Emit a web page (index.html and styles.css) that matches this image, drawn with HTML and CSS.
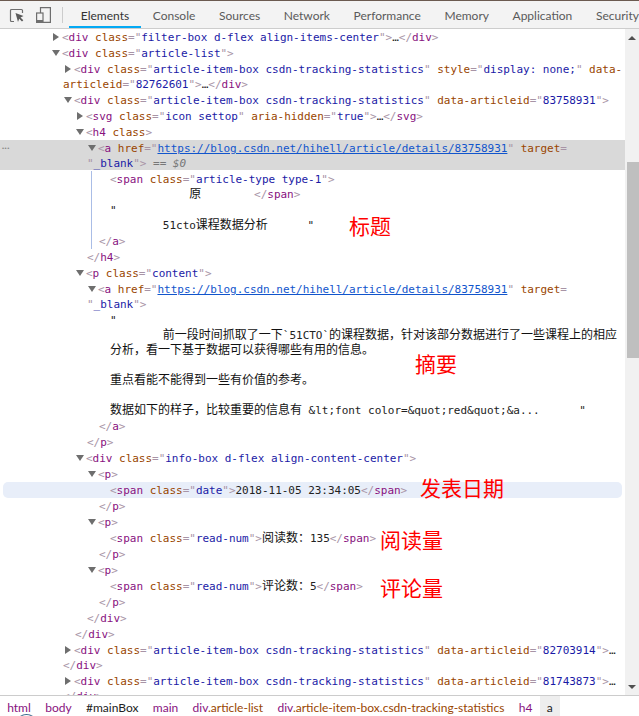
FILE: index.html
```html
<!DOCTYPE html>
<html lang="en">
<head>
<meta charset="utf-8">
<title>DevTools Elements</title>
<link rel="stylesheet" href="styles.css">
</head>
<body>
<div class="devtools">
  <header class="toolbar">
    <svg class="tool inspect" width="16" height="16" viewBox="0 0 16 16"><path d="M5 14.5H2.5a1 1 0 0 1-1-1v-10a1 1 0 0 1 1-1h10a1 1 0 0 1 1 1V6" fill="none" stroke="#6e6e6e" stroke-width="1.2"/><path d="M6.5 6l8 3-3 1.4 2.8 2.8-1.3 1.3-2.8-2.8L9 15z" fill="#5a5a5a"/></svg>
    <svg class="tool device" width="16" height="16" viewBox="0 0 16 16"><path d="M5.5 6V.6h9.9v14.8H8" fill="none" stroke="#6e6e6e" stroke-width="1.2"/><rect x="1.6" y="6" width="6.4" height="9.4" fill="#f3f3f3" stroke="#6e6e6e" stroke-width="1.2"/><rect x="1.6" y="13" width="6.4" height="2.4" fill="#6e6e6e"/></svg>
    <span class="divider"></span>
    <nav class="tabs">
      <span class="tab active">Elements</span>
      <span class="tab">Console</span>
      <span class="tab">Sources</span>
      <span class="tab">Network</span>
      <span class="tab">Performance</span>
      <span class="tab">Memory</span>
      <span class="tab">Application</span>
      <span class="tab">Security</span>
    </nav>
  </header>
  <main class="body">
    <div class="tree">
      <div class="row a0"><span class="tw r"></span><i>&lt;</i><b>div</b> <u>class</u><i>="</i><s>filter-box d-flex align-items-center</s><i>"&gt;</i>…<i>&lt;/</i><b>div</b><i>&gt;</i></div>
      <div class="row a0"><span class="tw d"></span><i>&lt;</i><b>div</b> <u>class</u><i>="</i><s>article-list</s><i>"&gt;</i></div>
      <div class="row a1"><span class="tw r"></span><i>&lt;</i><b>div</b> <u>class</u><i>="</i><s>article-item-box csdn-tracking-statistics</s><i>"</i> <u>style</u><i>="</i><s>display: none;</s><i>"</i> <u>data-<br>articleid</u><i>="</i><s>82762601</s><i>"&gt;</i>…<i>&lt;/</i><b>div</b><i>&gt;</i></div>
      <div class="row a1"><span class="tw d"></span><i>&lt;</i><b>div</b> <u>class</u><i>="</i><s>article-item-box csdn-tracking-statistics</s><i>"</i> <u>data-articleid</u><i>="</i><s>83758931</s><i>"&gt;</i></div>
      <div class="row a2"><span class="tw r"></span><i>&lt;</i><b>svg</b> <u>class</u><i>="</i><s>icon settop</s><i>"</i> <u>aria-hidden</u><i>="</i><s>true</s><i>"&gt;</i>…<i>&lt;/</i><b>svg</b><i>&gt;</i></div>
      <div class="row a2"><span class="tw d"></span><i>&lt;</i><b>h4</b> <u>class</u><i>&gt;</i></div>
      <div class="row a3 selected"><span class="dots">•••</span><span class="tw d"></span><i>&lt;</i><b>a</b> <u>href</u><i>="</i><a class="link">https://blog.csdn.net/hihell/article/details/83758931</a><i>"</i> <u>target</u><i>=<br>"</i><s>_blank</s><i>"&gt;</i> <em>== $0</em></div>
      <div class="guarded">
        <div class="row t110"><i>&lt;</i><b>span</b> <u>class</u><i>="</i><s>article-type type-1</s><i>"&gt;</i><br>            <span class="zh">原</span>        <i>&lt;/</i><b>span</b><i>&gt;</i></div>
        <div class="row t110">"<br>        51cto<span class="zh">课程数据分析</span>      "</div>
        <div class="row t98"><i>&lt;/</i><b>a</b><i>&gt;</i></div>
      </div>
      <div class="row t86"><i>&lt;/</i><b>h4</b><i>&gt;</i></div>
      <div class="row a2"><span class="tw d"></span><i>&lt;</i><b>p</b> <u>class</u><i>="</i><s>content</s><i>"&gt;</i></div>
      <div class="row a3"><span class="tw d"></span><i>&lt;</i><b>a</b> <u>href</u><i>="</i><a class="link">https://blog.csdn.net/hihell/article/details/83758931</a><i>"</i> <u>target</u><i>=<br>"</i><s>_blank</s><i>"&gt;</i></div>
      <div class="row t110">"<br>        <span class="zh">前一段时间抓取了一下</span>`51CTO`<span class="zh">的课程数据，针对该部分数据进行了一些课程上的相应</span><br><span class="zh">分析，看一下基于数据可以获得哪些有用的信息。</span><br> <br><span class="zh">重点看能不能得到一些有价值的参考。</span><br> <br><span class="zh">数据如下的样子，比较重要的信息有</span> &amp;lt;font color=&amp;quot;red&amp;quot;&amp;a...      "</div>
      <div class="row t98"><i>&lt;/</i><b>a</b><i>&gt;</i></div>
      <div class="row t86"><i>&lt;/</i><b>p</b><i>&gt;</i></div>
      <div class="row a2"><span class="tw d"></span><i>&lt;</i><b>div</b> <u>class</u><i>="</i><s>info-box d-flex align-content-center</s><i>"&gt;</i></div>
      <div class="row a3"><span class="tw d"></span><i>&lt;</i><b>p</b><i>&gt;</i></div>
      <div class="row t110 hover"><i>&lt;</i><b>span</b> <u>class</u><i>="</i><s>date</s><i>"&gt;</i>2018-11-05 23:34:05<i>&lt;/</i><b>span</b><i>&gt;</i></div>
      <div class="row t98"><i>&lt;/</i><b>p</b><i>&gt;</i></div>
      <div class="row a3"><span class="tw d"></span><i>&lt;</i><b>p</b><i>&gt;</i></div>
      <div class="row t110"><i>&lt;</i><b>span</b> <u>class</u><i>="</i><s>read-num</s><i>"&gt;</i><span class="zh">阅读数：</span>135<i>&lt;/</i><b>span</b><i>&gt;</i></div>
      <div class="row t98"><i>&lt;/</i><b>p</b><i>&gt;</i></div>
      <div class="row a3"><span class="tw d"></span><i>&lt;</i><b>p</b><i>&gt;</i></div>
      <div class="row t110"><i>&lt;</i><b>span</b> <u>class</u><i>="</i><s>read-num</s><i>"&gt;</i><span class="zh">评论数：</span>5<i>&lt;/</i><b>span</b><i>&gt;</i></div>
      <div class="row t98"><i>&lt;/</i><b>p</b><i>&gt;</i></div>
      <div class="row t86"><i>&lt;/</i><b>div</b><i>&gt;</i></div>
      <div class="row t74"><i>&lt;/</i><b>div</b><i>&gt;</i></div>
      <div class="row a1"><span class="tw r"></span><i>&lt;</i><b>div</b> <u>class</u><i>="</i><s>article-item-box csdn-tracking-statistics</s><i>"</i> <u>data-articleid</u><i>="</i><s>82703914</s><i>"&gt;</i>…<br><i>&lt;/</i><b>div</b><i>&gt;</i></div>
      <div class="row a1"><span class="tw r"></span><i>&lt;</i><b>div</b> <u>class</u><i>="</i><s>article-item-box csdn-tracking-statistics</s><i>"</i> <u>data-articleid</u><i>="</i><s>81743873</s><i>"&gt;</i>…<br><i>&lt;/</i><b>div</b><i>&gt;</i></div>
      <span class="note n1">标题</span>
      <span class="note n2">摘要</span>
      <span class="note n3">发表日期</span>
      <span class="note n4">阅读量</span>
      <span class="note n5">评论量</span>
    </div>
    <aside class="scrollbar">
      <span class="sb-up"></span>
      <span class="sb-thumb"></span>
      <span class="sb-down"></span>
    </aside>
  </main>
  <footer class="crumbs">
    <span class="crumb tag">html</span>
    <span class="crumb tag">body</span>
    <span class="crumb id">#mainBox</span>
    <span class="crumb tag">main</span>
    <span class="crumb tag">div<span class="cls">.article-list</span></span>
    <span class="crumb tag">div<span class="cls">.article-item-box.csdn-tracking-statistics</span></span>
    <span class="crumb tag">h4</span>
    <span class="crumb id current">a</span>
    <span class="arc"></span>
  </footer>
</div>
</body>
</html>
```
FILE: styles.css
```css
* { box-sizing: border-box; }
html, body { margin: 0; height: 100%; overflow: hidden; background: #fff; }
.devtools { display: flex; flex-direction: column; height: 716px; width: 639px; border-top: 1px solid #6b5a50; overflow: hidden; position: relative; }

.toolbar { display: flex; align-items: center; height: 28px; flex: none; background: #f3f3f3; border-bottom: 1px solid #cdcdcd; padding: 1px 0 0 9px; font: 12px Lato, "Open Sans", sans-serif; color: #5a5a5a; }
.tool { flex: none; }
.device { margin-left: 10px; }
.divider { width: 1px; height: 16px; background: #ccc; margin: 0 6px 0 11px; flex: none; }
.tabs { display: flex; align-self: stretch; margin-top: -1px; height: 27px; white-space: nowrap; }
.tab { display: flex; align-items: center; padding: 1px 11.8px 0; }
.tab.active { color: #333; box-shadow: inset 0 -2px 0 #03a9f4; }

.body { flex: 1; display: flex; min-height: 0; }
.tree { flex: 1; min-width: 0; position: relative; overflow: hidden; font: 11px/15px "DejaVu Sans Mono", "Noto Sans CJK SC", monospace; letter-spacing: -0.02px; color: #222; }
.row { position: relative; white-space: pre-wrap; padding-top: 1px; }
.a0 { padding-left: 51px; }
.a1 { padding-left: 63px; }
.a2 { padding-left: 75px; }
.a3 { padding-left: 87px; }
.t74 { padding-left: 75px; }
.t86 { padding-left: 87px; }
.t98 { padding-left: 99px; }
.t110 { padding-left: 110px; }

.tw { display: inline-block; width: 11px; height: 8px; position: relative; }
.tw::before { content: ""; position: absolute; width: 0; height: 0; }
.tw.r::before { left: 2px; top: 0; border-left: 6px solid #6e6e6e; border-top: 4px solid transparent; border-bottom: 4px solid transparent; }
.tw.d::before { left: 1px; top: 1px; border-top: 6px solid #6e6e6e; border-left: 4px solid transparent; border-right: 4px solid transparent; }

i { font-style: normal; color: #a894a6; }
b { font-weight: normal; color: #881280; }
u { text-decoration: none; color: #994500; }
s { text-decoration: none; color: #1a1aa6; }
.link { color: #1155cc; text-decoration: underline; }
em { color: #777; font-style: italic; }
.zh { font: 12px/1 "Noto Sans CJK SC", sans-serif; letter-spacing: 0; color: #111; }

.selected { background: linear-gradient(#d9d9d9, #d9d9d9) top / 100% calc(100% - 1px) no-repeat; }
.dots { position: absolute; left: 2px; top: 1px; font: 6px/14px "Liberation Sans", sans-serif; letter-spacing: 0.5px; color: #8a8a8a; }
.hover { background: #e8eef9; border-radius: 5px; margin-left: 3px; margin-right: 3px; padding-left: 107px; }
.guarded { position: relative; }
.guarded::before { content: ""; position: absolute; left: 91px; top: 0; bottom: 0; width: 1px; background: #aabde6; }

.note { position: absolute; font: 21px/28px "Noto Sans CJK SC", sans-serif; letter-spacing: 0; color: #f00; white-space: nowrap; }
.n1 { left: 349px; top: 182px; }
.n2 { left: 415px; top: 320px; }
.n3 { left: 420px; top: 444px; }
.n4 { left: 380px; top: 496px; }
.n5 { left: 380px; top: 544px; }

.scrollbar { flex: none; width: 14px; background: #f1f1f1; position: relative; }
.sb-thumb { position: absolute; left: 2px; right: 0; top: 133px; height: 196px; background: #bfbfbf; }
.sb-up, .sb-down { position: absolute; left: 3px; width: 0; height: 0; border-left: 4px solid transparent; border-right: 4px solid transparent; }
.sb-up { top: 7px; border-bottom: 4px solid #505050; }
.sb-down { bottom: 6px; border-top: 4px solid #505050; }

.crumbs { flex: none; height: 21px; display: flex; align-items: stretch; background: #fff; border-top: 1px solid #ccc; font: 12px Lato, "Open Sans", sans-serif; position: relative; white-space: nowrap; overflow: hidden; }
.crumb { padding: 3px 7.2px 0; line-height: 17px; }
.crumb.tag { color: #881280; }
.crumb.id { color: #222; }
.cls { color: #994500; }
.current { background: #eee; }
.arc { position: absolute; left: 16px; bottom: -17px; width: 21px; height: 19px; border-radius: 50%; border: 1px solid #3c6a8c; }
```
